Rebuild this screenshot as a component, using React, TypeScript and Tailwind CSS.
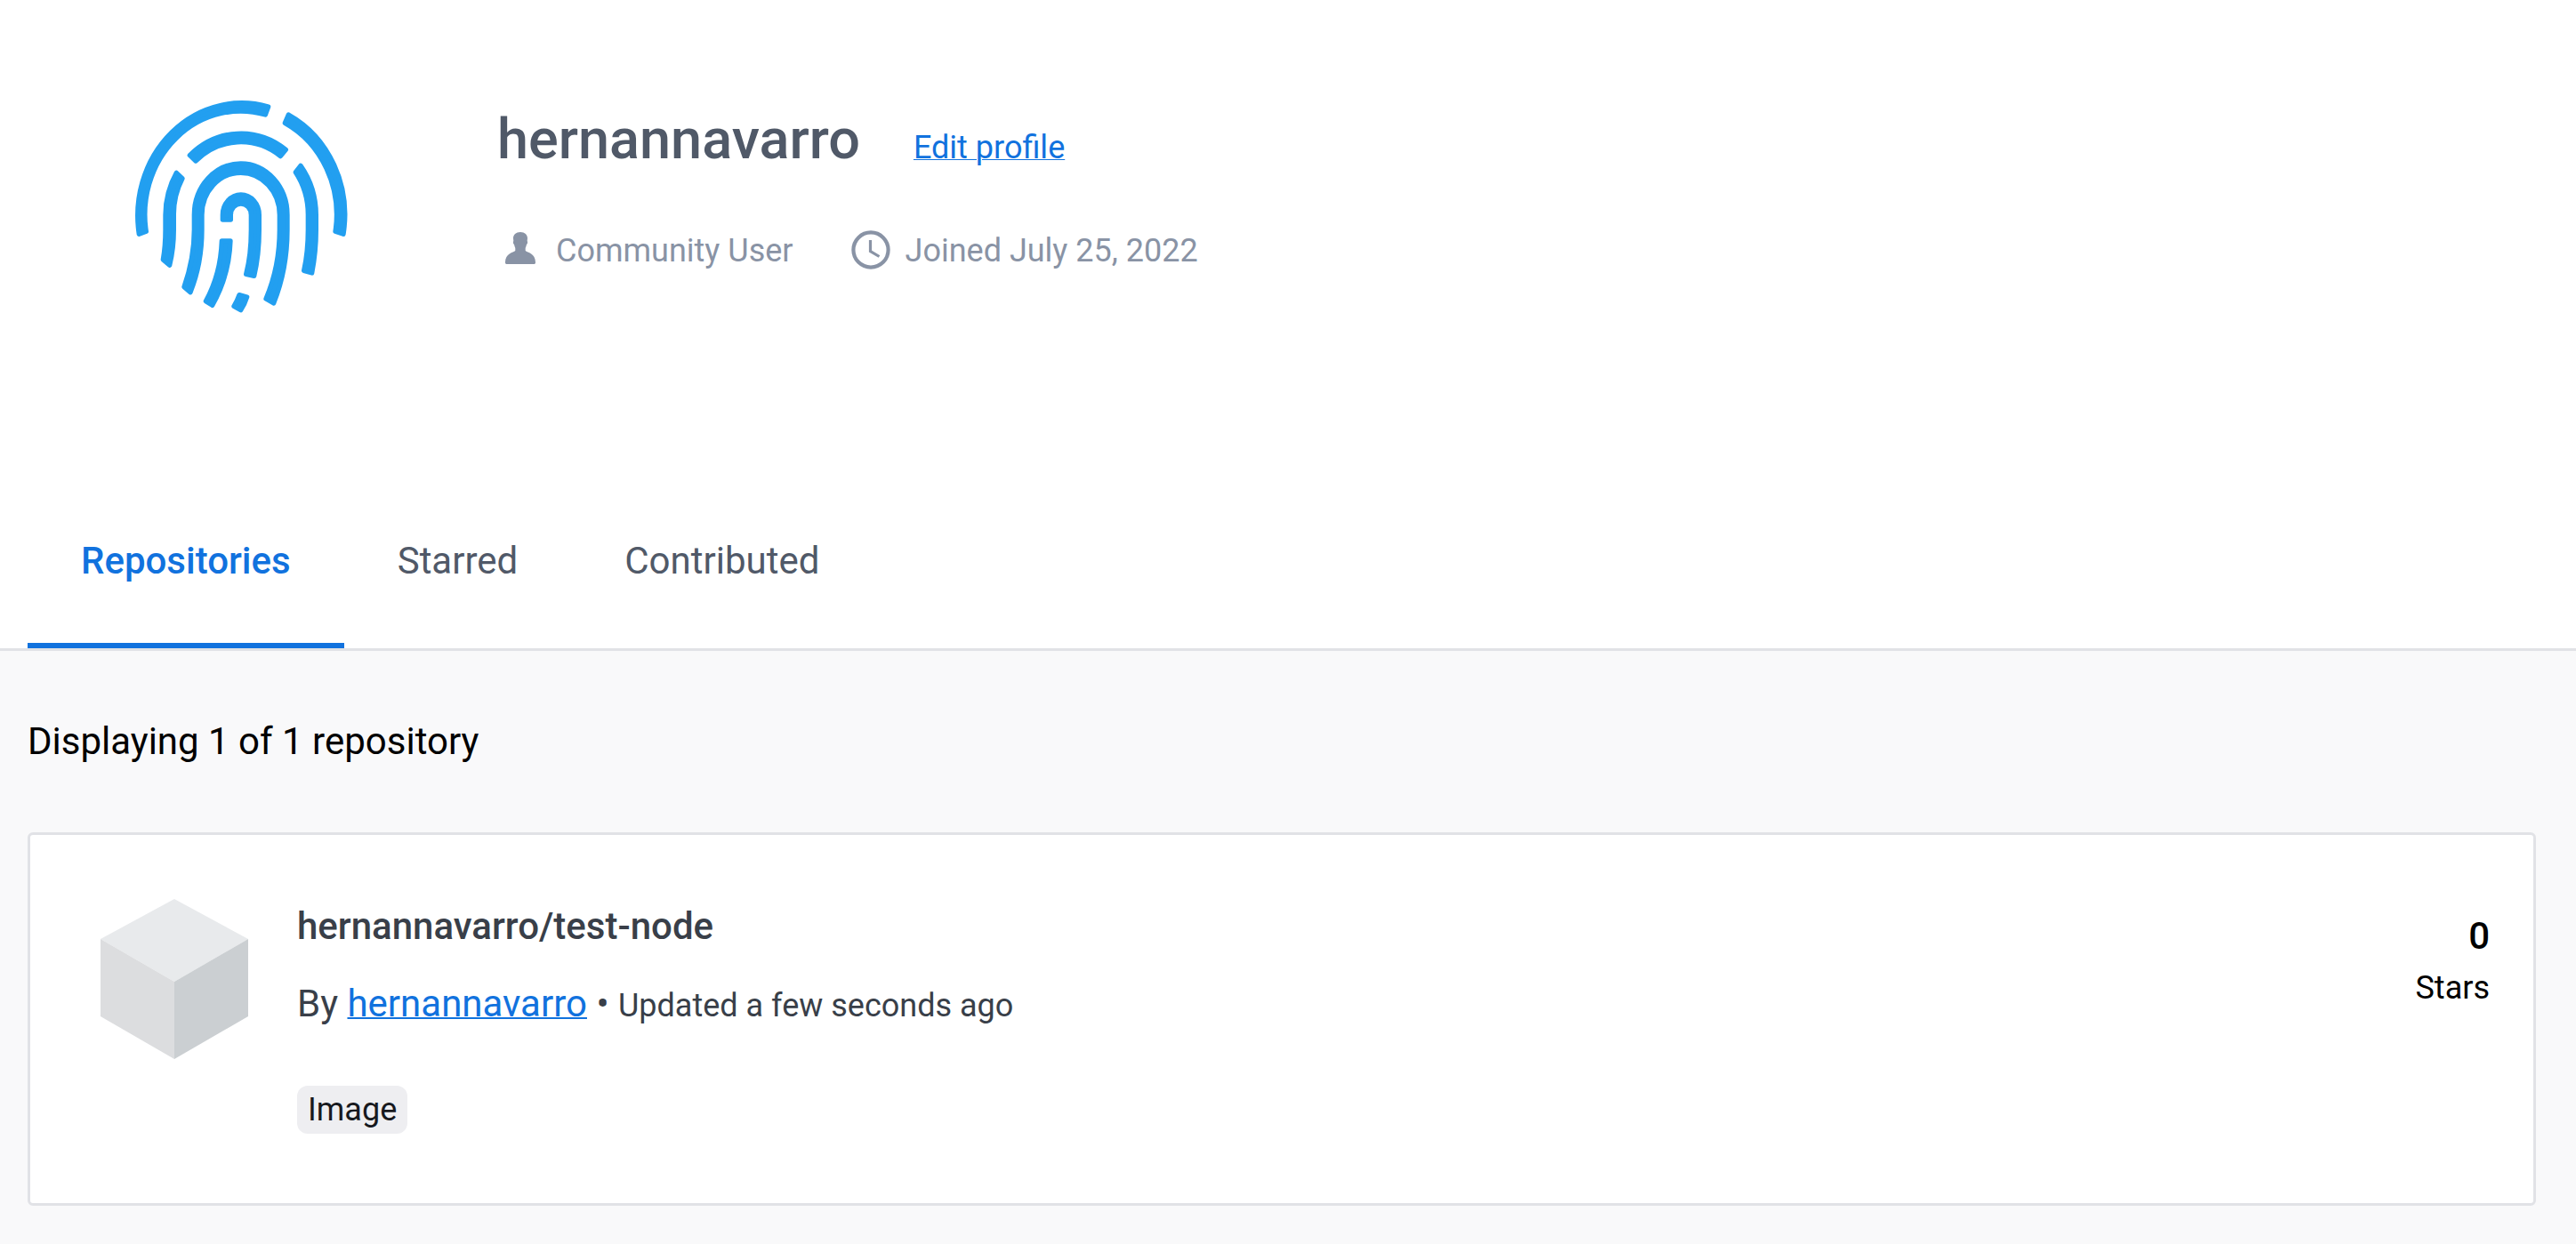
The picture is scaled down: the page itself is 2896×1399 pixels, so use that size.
import React from "react";

function Fingerprint() {
  return (
    <svg
      viewBox="0 0 840 840"
      className="size-[280px] shrink-0"
      fill="#229FF0"
      stroke="#229FF0"
      strokeWidth="16"
      strokeLinejoin="round"
      aria-hidden="true"
    >
      <path d="M79 520A351 380 0 0 1 515 90L505 117A323 349 0 0 0 103 511Z" />
      <path d="M583 117A351 380 0 0 1 768 520L741 511A323 349 0 0 0 571 145Z" />
      <path d="M250 254A254 276 0 0 1 574 235L556 257A226 246 0 0 0 270 273Z" />
      <path d="M205 313A254 276 0 0 0 168 455V505Q168 560 160 606L182 625Q196 570 196 505V455A226 246 0 0 1 225 332Z" />
      <path d="M624 289A254 276 0 0 1 676 455V505Q676 580 662 651L635 643Q649 580 649 505V455A226 246 0 0 0 607 311Z" />
      <path d="M231 698Q265 600 265 505V455A157 173 0 0 1 579 455V505Q579 640 533 753L507 738Q553 630 553 505V455A131 142 0 0 0 291 455V505Q291 620 252 716Z" />
      <path d="M361 471V455A61 68 0 0 1 484 455V505Q484 590 467 661L440 655Q457 590 457 505V455A34 37 0 0 0 388 455V471Z" />
      <path d="M358 543H387Q383 660 326 760L304 746Q354 655 358 543Z" />
      <path d="M417 725L443 732Q436 755 422 776L399 763Q410 745 417 725Z" />
    </svg>
  );
}

function UserIcon() {
  return (
    <svg viewBox="0 0 60 60" className="size-[60px]" fill="#8993A5" aria-hidden="true">
      <path d="M26 9C31 9 34 12 34 16C34 17 33.700 18 33.700 19C34.500 20 34 22.500 33 23C32.500 25 32 26 31.700 27V30C34 32 43 33 43 43C43 44.500 42.500 45 41 45H11C9.500 45 9 44.500 9 43C9 33 18 32 20.300 30V27C20 26 19.500 25 19 23C18 22.500 17.500 20 18.300 19C18.300 18 18 17 18 16C18 12 21 9 26 9Z" />
    </svg>
  );
}

function ClockIcon() {
  return (
    <svg viewBox="0 0 60 60" className="size-[60px]" fill="none" stroke="#8993A5" aria-hidden="true">
      <circle cx="27" cy="29" r="19.6" strokeWidth="4.2" />
      <path d="M26.500 18V30.500L36.500 36.500" strokeWidth="3.2" />
    </svg>
  );
}

function Cube() {
  return (
    <svg viewBox="0 0 166 180" className="h-[180px] w-[166px] shrink-0" aria-hidden="true">
      <path d="M83 0L166 45L83 93L0 45Z" fill="#E8EAEC" />
      <path d="M0 45L83 93V180L0 132Z" fill="#DCDDDF" />
      <path d="M166 45L83 93V180L166 132Z" fill="#CBCFD2" />
    </svg>
  );
}

export default function App() {
  return (
    <div className="min-h-screen bg-[#F9F9FA] font-['Roboto',sans-serif] text-[42px] leading-[60px] text-black">
      <header className="border-b-3 border-[#E1E2E6] bg-white">
        <div className="flex px-[130px] pt-[90px]">
          <Fingerprint />
          <div className="pt-[25px] pl-[149px]">
            <div className="flex items-baseline gap-[60px]">
              <h1 className="text-[63px] leading-[84px] font-medium text-[#505968]">hernannavarro</h1>
              <a href="#edit" className="text-[36px] leading-[48px] text-[#1172DE] underline decoration-1">
                Edit profile
              </a>
            </div>
            <div className="mt-[53px] flex items-center gap-[60px] text-[36px] text-[#8993A5]">
              <span className="flex items-center gap-[6px]">
                <UserIcon />
                Community User
              </span>
              <span className="flex items-center gap-[6px]">
                <ClockIcon />
                Joined July 25, 2022
              </span>
            </div>
          </div>
        </div>
        <nav className="mt-[162px] flex px-[31px] text-[#505968]">
          <button className="border-b-6 border-[#1172DE] px-[60px] pt-[69px] pb-[62px] font-medium text-[#1172DE]">
            Repositories
          </button>
          <button className="px-[60px] pt-[69px] pb-[68px]">Starred</button>
          <button className="px-[60px] pt-[69px] pb-[68px]">Contributed</button>
        </nav>
      </header>
      <main className="pr-[45px] pl-[31px]">
        <p className="pt-[72px]">Displaying 1 of 1 repository</p>
        <article className="mt-[72px] flex rounded-[6px] border-3 border-[#E1E2E6] bg-white pt-[72px] pr-[49px] pb-[78px] pl-[79px]">
          <Cube />
          <div className="pl-[55px] text-[#393F49]">
            <h2 className="leading-[62px] font-medium">hernannavarro/test-node</h2>
            <p className="mt-[26px]">
              By{" "}
              <a href="#user" className="text-[#1172DE] underline decoration-2">
                hernannavarro
              </a>{" "}
              • <span className="text-[36px]">Updated a few seconds ago</span>
            </p>
            <span className="mt-[60px] block w-fit rounded-[12px] bg-[#EEEEF1] px-[12px] text-[36px] leading-[54px] text-[#17191E]">
              Image
            </span>
          </div>
          <div className="ml-auto pt-[12px] text-right">
            <p className="font-medium">0</p>
            <p className="text-[36px] leading-[56px]">Stars</p>
          </div>
        </article>
      </main>
    </div>
  );
}
